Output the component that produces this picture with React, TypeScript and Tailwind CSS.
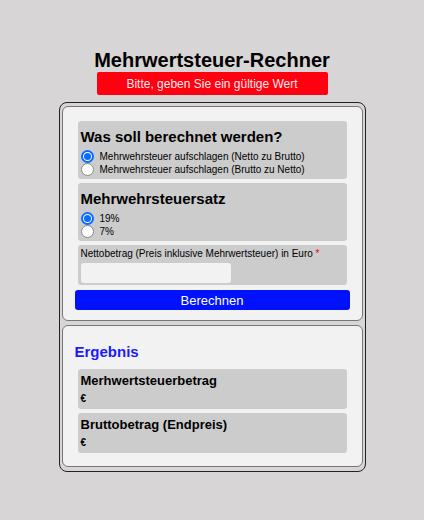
import React from "react";

function Radio({ checked, label }: { checked?: boolean; label: string }) {
  return (
    <label className="flex items-center gap-[6px] h-[13px] text-[10px] leading-none">
      {checked ? (
        <span className="w-[13px] h-[13px] rounded-full border-2 border-[#0a6cff] bg-white flex items-center justify-center shrink-0">
          <span className="w-[7px] h-[7px] rounded-full bg-[#0a6cff]" />
        </span>
      ) : (
        <span className="w-[13px] h-[13px] rounded-full bg-white border border-[#8a8a8a] shrink-0" />
      )}
      <span>{label}</span>
    </label>
  );
}

export default function App() {
  return (
    <div
      className="min-h-[520px] bg-[#d7d5d6] text-black flex flex-col items-center pt-[49px]"
      style={{ fontFamily: '"Liberation Sans", Arial, sans-serif' }}
    >
      <h1 className="text-[20px] font-bold leading-[22px]">Mehrwertsteuer-Rechner</h1>
      <div className="mt-[1px] w-[231px] h-[23px] bg-[#ff0010] rounded-[2px] text-[#ffe8e8] text-[12px] flex items-center justify-center">
        Bitte, geben Sie ein gültige Wert
      </div>

      <div className="mt-[7px] w-[307px] border border-[#222] rounded-[8px] px-[2px] pt-[3px] pb-[4px] flex flex-col gap-[4px]">
        <div className="border border-[#777] rounded-[6px] bg-[#f2f2f2] px-3 pt-[14px] pb-[10px] flex flex-col gap-[4px]">
          <div className="mx-[3px] h-[58px] bg-[#cccccc] rounded-[3px] px-[3px] pt-[6px]">
            <h2 className="text-[15px] font-bold leading-[20px] mb-[3px]">Was soll berechnet werden?</h2>
            <Radio checked label="Mehrwehrsteuer aufschlagen (Netto zu Brutto)" />
            <Radio label="Mehrwehrsteuer aufschlagen (Brutto zu Netto)" />
          </div>
          <div className="mx-[3px] h-[58px] bg-[#cccccc] rounded-[3px] px-[3px] pt-[6px]">
            <h2 className="text-[15px] font-bold leading-[20px] mb-[3px]">Mehrwehrsteuersatz</h2>
            <Radio checked label="19%" />
            <Radio label="7%" />
          </div>
          <div className="mx-[3px] h-[40px] bg-[#cccccc] rounded-[3px] px-[3px] pt-[3px]">
            <div className="text-[10px] leading-[12px]">
              Nettobetrag (Preis inklusive Mehrwertsteuer) in Euro <span className="text-[#e00]">*</span>
            </div>
            <div className="mt-[3px] w-[150px] h-[20px] bg-[#f2f2f2] rounded-[3px]" />
          </div>
          <button className="mt-[1px] h-[20px] shrink-0 w-full bg-[#0011ff] rounded-[3px] text-white text-[13px] leading-none">
            Berechnen
          </button>
        </div>

        <div className="border border-[#777] rounded-[6px] bg-[#f2f2f2] px-3 pt-[16px] pb-[13px] flex flex-col gap-[4px]">
          <h2 className="text-[15px] font-bold text-[#1a1aff] leading-[20px] mb-[3px]">Ergebnis</h2>
          <div className="mx-[3px] h-[40px] bg-[#cccccc] rounded-[3px] px-[3px] pt-[4px]">
            <div className="text-[13px] font-bold leading-[16px]">Merhwertsteuerbetrag</div>
            <div className="text-[10px] font-bold leading-[12px] mt-[4px]">€</div>
          </div>
          <div className="mx-[3px] h-[40px] bg-[#cccccc] rounded-[3px] px-[3px] pt-[4px]">
            <div className="text-[13px] font-bold leading-[16px]">Bruttobetrag (Endpreis)</div>
            <div className="text-[10px] font-bold leading-[12px] mt-[4px]">€</div>
          </div>
        </div>
      </div>
    </div>
  );
}
